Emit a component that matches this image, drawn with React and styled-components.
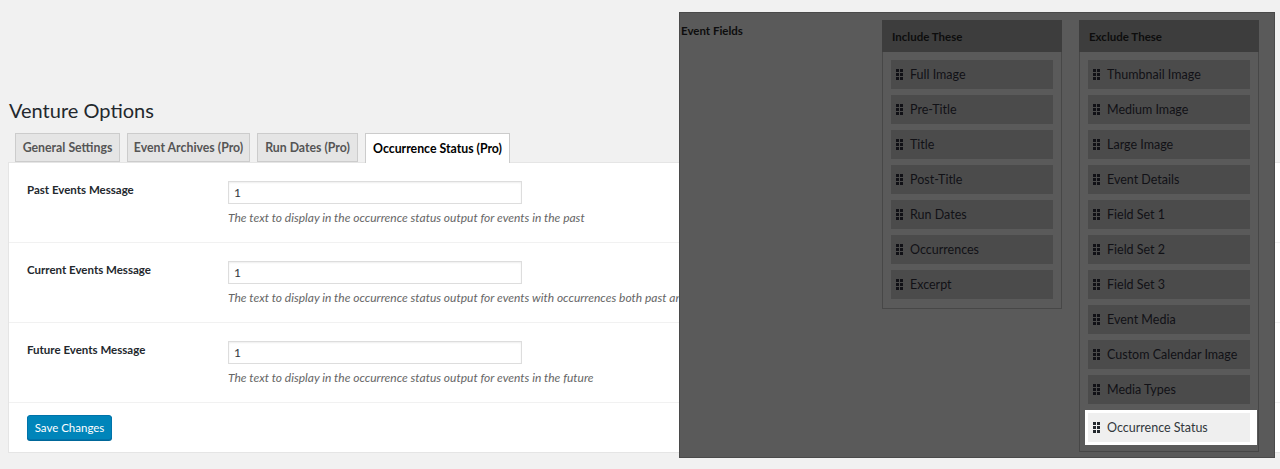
import React from 'react';
import styled, { createGlobalStyle } from 'styled-components';

const GlobalStyle = createGlobalStyle`
  html, body {
    margin: 0;
    padding: 0;
    background: #f1f1f1;
    overflow: hidden;
  }
  body {
    font-family: Lato, "Open Sans", "Liberation Sans", sans-serif;
    color: #23282d;
  }
`;

const Page = styled.div`
  position: relative;
  width: 1280px;
  height: 469px;
  overflow: hidden;
`;

const Wrap = styled.div`
  padding: 96px 0 0 9px;
`;

const Title = styled.h1`
  margin: 0 0 9px;
  font-size: 20px;
  font-weight: 400;
  line-height: 28px;
  color: #23282d;
`;

const Tabs = styled.div`
  display: flex;
  gap: 7px;
  padding-left: 6px;
  height: 29px;
  align-items: flex-start;
`;

const Tab = styled.div`
  box-sizing: border-box;
  width: ${p => p.$w}px;
  height: ${p => (p.$active ? '30px' : '29px')};
  display: flex;
  align-items: center;
  justify-content: center;
  padding-bottom: ${p => (p.$active ? '1px' : '0')};
  font-size: 12.3px;
  font-weight: 700;
  color: ${p => (p.$active ? '#000' : '#555')};
  background: ${p => (p.$active ? '#fff' : '#e5e5e5')};
  border: 1px solid #ccc;
  border-bottom: ${p => (p.$active ? 'none' : '1px solid #ccc')};
  position: relative;
  z-index: ${p => (p.$active ? 1 : 0)};
`;

const Panel = styled.div`
  background: #fff;
  border: 1px solid #e5e5e5;
  border-right: none;
  margin-right: -20px;
  margin-left: -1px;
`;

const Row = styled.div`
  display: grid;
  grid-template-columns: 201px 1fr;
  height: 80px;
  box-sizing: border-box;
  padding: 18px 0 0 18px;
  border-bottom: 1px solid #f1f1f1;
`;

const Label = styled.div`
  font-size: 11.5px;
  font-weight: 700;
  color: #23282d;
  padding-top: 2px;
`;

const Field = styled.div`
  display: flex;
  flex-direction: column;
  gap: 6px;
`;

const Input = styled.div`
  box-sizing: border-box;
  width: 294px;
  height: 23px;
  border: 1px solid #ddd;
  box-shadow: inset 0 1px 2px rgba(0, 0, 0, 0.07);
  padding: 0 5px;
  font-size: 12px;
  line-height: 21px;
  color: #32373c;
`;

const Desc = styled.div`
  font-size: 12px;
  font-style: italic;
  color: #666;
  white-space: nowrap;
`;

const Footer = styled.div`
  padding: 12px 18px;
`;

const Button = styled.div`
  box-sizing: border-box;
  width: 85px;
  height: 25px;
  display: flex;
  align-items: center;
  justify-content: center;
  background: #0085ba;
  border: 1px solid #0073aa;
  border-radius: 3px;
  box-shadow: 0 1px 0 #006799;
  color: #fff;
  font-size: 11.5px;
`;

/* dark drag-and-drop field picker laid over the page */
const Overlay = styled.div`
  position: absolute;
  left: 679px;
  top: 12px;
  width: 596px;
  height: 446px;
  box-sizing: border-box;
  background: #5a5a5a;
  border: 1px solid #4a4a4a;
  display: grid;
  grid-template-columns: 184px 180px 180px;
  column-gap: 17px;
  padding: 7px 0 0 1px;
  align-items: start;
`;

const FieldsTitle = styled.div`
  font-size: 11.5px;
  font-weight: 700;
  color: #0d0d0d;
  padding-top: 4px;
`;

const Column = styled.div`
  display: flex;
  flex-direction: column;
`;

const ColHead = styled.div`
  height: 32px;
  background: #3d3d3d;
  display: flex;
  align-items: center;
  padding-left: 10px;
  font-size: 11.5px;
  font-weight: 700;
  color: #0d0d0d;
`;

const ColBody = styled.div`
  border: 1px solid #474747;
  border-top: none;
  padding: 8px 8px 9px;
  display: flex;
  flex-direction: column;
  gap: 6px;
`;

const Item = styled.div`
  box-sizing: border-box;
  height: 29px;
  display: flex;
  align-items: center;
  gap: 7px;
  padding-left: 5px;
  margin-top: ${p => (p.$lit ? '3px' : '0')};
  font-size: 12.5px;
  color: ${p => (p.$lit ? '#32373c' : '#111116')};
  background: ${p => (p.$lit ? '#efefef' : '#4b4b4b')};
  box-shadow: ${p => (p.$lit ? '0 0 0 3px #fff, 4px 0 0 3px #fff' : 'none')};
`;

const Handle = ({ color }) => (
  <svg width="7" height="11" viewBox="0 0 7 11" shapeRendering="crispEdges">
    {[0, 4, 8].map(y => (
      <g key={y} fill={color}>
        <rect x="0" y={y} width="3" height="3" />
        <rect x="4" y={y} width="3" height="3" />
      </g>
    ))}
  </svg>
);

const include = ['Full Image', 'Pre-Title', 'Title', 'Post-Title', 'Run Dates', 'Occurrences', 'Excerpt'];
const exclude = [
  'Thumbnail Image', 'Medium Image', 'Large Image', 'Event Details', 'Field Set 1', 'Field Set 2',
  'Field Set 3', 'Event Media', 'Custom Calendar Image', 'Media Types', 'Occurrence Status',
];

const rows = [
  ['Past Events Message', 'The text to display in the occurrence status output for events in the past'],
  ['Current Events Message', 'The text to display in the occurrence status output for events with occurrences both past and future'],
  ['Future Events Message', 'The text to display in the occurrence status output for events in the future'],
];

const tabs = [
  ['General Settings', 105],
  ['Event Archives (Pro)', 123],
  ['Run Dates (Pro)', 101],
  ['Occurrence Status (Pro)', 145, true],
];

export default function App() {
  return (
    <Page>
      <GlobalStyle />
      <Wrap>
        <Title>Venture Options</Title>
        <Tabs>
          {tabs.map(([t, w, a]) => (
            <Tab key={t} $w={w} $active={a}>{t}</Tab>
          ))}
        </Tabs>
        <Panel>
          {rows.map(([l, d]) => (
            <Row key={l}>
              <Label>{l}</Label>
              <Field>
                <Input>1</Input>
                <Desc>{d}</Desc>
              </Field>
            </Row>
          ))}
          <Footer>
            <Button>Save Changes</Button>
          </Footer>
        </Panel>
      </Wrap>

      <Overlay>
        <FieldsTitle>Event Fields</FieldsTitle>
        <Column>
          <ColHead>Include These</ColHead>
          <ColBody>
            {include.map(f => (
              <Item key={f}><Handle color="#111116" />{f}</Item>
            ))}
          </ColBody>
        </Column>
        <Column>
          <ColHead>Exclude These</ColHead>
          <ColBody>
            {exclude.map((f, i) => {
              const lit = i === exclude.length - 1;
              return (
                <Item key={f} $lit={lit}>
                  <Handle color={lit ? '#23282d' : '#111116'} />{f}
                </Item>
              );
            })}
          </ColBody>
        </Column>
      </Overlay>
    </Page>
  );
}
